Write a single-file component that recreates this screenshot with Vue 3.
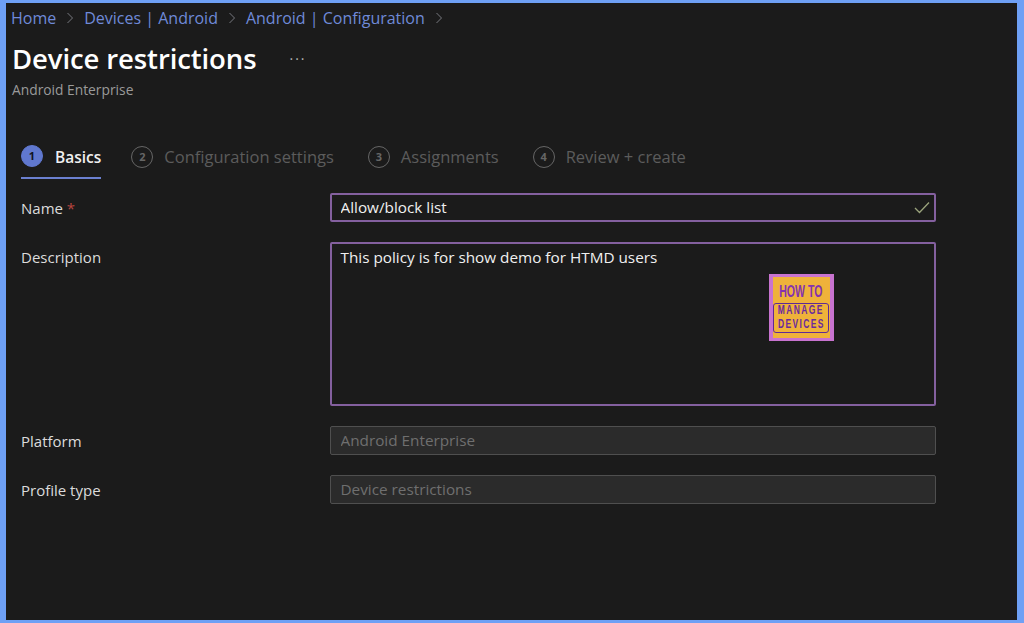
<template>
  <div class="frame">
    <div class="page">
      <nav class="crumbs">
        <template v-for="c in crumbs" :key="c">
          <a>{{ c }}</a>
          <svg class="chev" width="8" height="12" viewBox="0 0 8 12"><path d="M1.5 1l5 5-5 5" fill="none" stroke="#77797f" stroke-width="1" /></svg>
        </template>
      </nav>
      <div class="title-row">
        <h1>Device restrictions</h1>
        <span class="dots">...</span>
      </div>
      <div class="subtitle">Android Enterprise</div>

      <div class="tabs">
        <div v-for="(t, i) in tabs" :key="t" class="tab" :class="{ active: i === 0 }">
          <span class="num">{{ i + 1 }}</span>
          <span class="tab-label">{{ t }}</span>
        </div>
      </div>

      <form class="form" @submit.prevent>
        <div class="row">
          <label>Name <span class="req">*</span></label>
          <div class="field">
            <input class="input focus" type="text" value="Allow/block list" readonly />
            <svg class="check" width="16" height="13" viewBox="0 0 16 13"><path d="M1 7l4.5 4.5L15 1.5" fill="none" stroke="#9aa37c" stroke-width="1.3" /></svg>
          </div>
        </div>
        <div class="row">
          <label>Description</label>
          <div class="field">
            <textarea class="input focus area" readonly>This policy is for show demo for HTMD users</textarea>
            <div class="logo">
              <div class="logo-inner">
                <span class="how">HOW TO</span>
                <div class="logo-box">
                  <span>MANAGE</span>
                  <span>DEVICES</span>
                </div>
              </div>
            </div>
          </div>
        </div>
        <div class="row">
          <label>Platform</label>
          <div class="field"><input class="input off" type="text" value="Android Enterprise" disabled /></div>
        </div>
        <div class="row">
          <label>Profile type</label>
          <div class="field"><input class="input off" type="text" value="Device restrictions" disabled /></div>
        </div>
      </form>
    </div>
  </div>
</template>

<script setup>
const crumbs = ['Home', 'Devices | Android', 'Android | Configuration']
const tabs = ['Basics', 'Configuration settings', 'Assignments', 'Review + create']
</script>

<style>
html, body {
  margin: 0;
  background: #6ea0f5;
}
</style>

<style scoped>
.frame {
  box-sizing: border-box;
  width: 1024px;
  height: 623px;
  padding: 3px 7px 3px 6px;
  background: #6ea0f5;
  font-family: "Open Sans", "Noto Sans", sans-serif;
  overflow: hidden;
}
.page {
  height: 100%;
  box-sizing: border-box;
  background: #1b1b1b;
  padding: 4px 0 0 6px;
}
.crumbs {
  display: flex;
  align-items: center;
  height: 22px;
  margin-left: -1px;
  font-size: 16px;
  color: #6f8ad8;
}
.chev {
  margin: 0 10px;
}
.title-row {
  display: flex;
  align-items: center;
  margin-top: 9px;
  height: 40px;
}
h1 {
  margin: 0;
  font-size: 27.5px;
  font-weight: 600;
  color: #fff;
  letter-spacing: -0.1px;
}
.dots {
  margin: -8px 0 0 33px;
  color: #b5b5b5;
  font-size: 14px;
  letter-spacing: 2px;
}
.subtitle {
  margin-top: 3px;
  font-size: 13.8px;
  line-height: 17px;
  color: #9a9a9a;
}
.tabs {
  display: flex;
  margin: 38px 0 0 9px;
  height: 43px;
}
.tab {
  display: flex;
  align-items: center;
  height: 43px;
  box-sizing: border-box;
  padding-bottom: 2px;
  margin-right: 34px;
  font-size: 16.5px;
  color: #5c5c5c;
}
.tab.active {
  color: #f0f0f0;
  font-weight: 600;
  font-size: 15.5px;
  margin-right: 30px;
  border-bottom: 2px solid #6b80d0;
}
.tab-label {
  line-height: 24px;
  padding-top: 1px;
}
.active .tab-label {
  padding-top: 3px;
}
.num {
  box-sizing: border-box;
  width: 22px;
  height: 22px;
  margin-right: 11px;
  border: 1.5px solid #666;
  border-radius: 50%;
  display: flex;
  align-items: center;
  justify-content: center;
  font-size: 11px;
  font-weight: 700;
  color: #666;
}
.active .num {
  background: #6078cf;
  border-color: #6078cf;
  color: #10131f;
  margin-right: 12px;
}
.form {
  margin: 14px 0 0 9px;
  display: flex;
  flex-direction: column;
  gap: 20px;
}
.row {
  display: flex;
}
label {
  box-sizing: border-box;
  width: 308.5px;
  height: 29px;
  flex: none;
  font-size: 15px;
  line-height: 29px;
  padding-top: 1px;
  color: #dcdcdc;
}
.req {
  color: #b8453f;
}
.field {
  position: relative;
  width: 606.5px;
}
.input {
  display: block;
  box-sizing: border-box;
  width: 100%;
  height: 29px;
  padding: 0 10px 2px;
  margin: 0;
  border-radius: 2px;
  font-family: inherit;
  font-size: 15.3px;
  outline: none;
  resize: none;
}
.focus {
  background: #1b1b1b;
  border: 2px solid #84609f;
  padding-left: 9px;
  color: #f0f0f0;
}
.area {
  height: 164px;
  padding-top: 1px;
  line-height: 24px;
}
.off {
  background: #2b2b2b;
  border: 1px solid #4f4f4f;
  color: #6f6f6f;
  -webkit-text-fill-color: #6f6f6f;
  opacity: 1;
}
.check {
  position: absolute;
  right: 6px;
  top: 8px;
}
.logo {
  position: absolute;
  left: 439px;
  top: 32px;
  width: 65px;
  height: 67px;
  box-sizing: border-box;
  padding: 3px 4px;
  background: #c873cf;
}
.logo-inner {
  height: 100%;
  background: #efb23a;
  display: flex;
  flex-direction: column;
  align-items: center;
  color: #6a2a9e;
  font-family: "Liberation Sans", sans-serif;
  font-weight: 700;
}
.how {
  margin-top: 6px;
  font-size: 17px;
  line-height: 17px;
  color: #8433b0;
  transform: scaleX(0.62);
  white-space: nowrap;
}
.logo-box {
  box-sizing: border-box;
  width: 56px;
  height: 30px;
  margin-top: 3px;
  border: 1.5px solid #5f2a96;
  border-radius: 3px;
  display: flex;
  flex-direction: column;
  align-items: center;
  font-size: 12.5px;
  line-height: 13.5px;
  padding-top: 0;
  white-space: nowrap;
}
.logo-box span {
  transform: scaleX(0.68);
  letter-spacing: 2px;
}
</style>
